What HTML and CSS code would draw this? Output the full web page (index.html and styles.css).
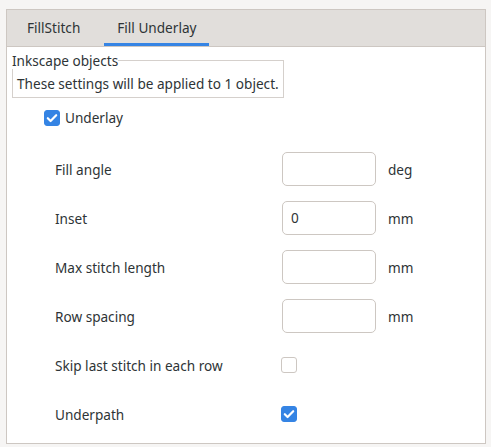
FILE: index.html
```html
<!DOCTYPE html>
<html>
<head>
<meta charset="utf-8">
<link rel="stylesheet" href="styles.css">
</head>
<body>
<div class="notebook">
  <div class="tabs">
    <div class="tab">FillStitch</div>
    <div class="tab active">Fill Underlay</div>
  </div>
  <div class="page">
    <fieldset class="frame">
      <legend class="frame-label">Inkscape objects</legend>
      <div class="frame-text">These settings will be applied to 1 object.</div>
    </fieldset>
    <label class="underlay">
      <span class="check on"><svg viewBox="0 0 16 16" width="16" height="16"><path d="M3.8 8.2 L6.6 11 L12.2 5.2" fill="none" stroke="#fff" stroke-width="2.2" stroke-linecap="round" stroke-linejoin="round"/></svg></span>
      <span>Underlay</span>
    </label>
    <div class="grid">
      <div class="lbl">Fill angle</div>
      <div class="entry"></div>
      <div class="unit">deg</div>

      <div class="lbl">Inset</div>
      <div class="entry">0</div>
      <div class="unit">mm</div>

      <div class="lbl">Max stitch length</div>
      <div class="entry"></div>
      <div class="unit">mm</div>

      <div class="lbl">Row spacing</div>
      <div class="entry"></div>
      <div class="unit">mm</div>

      <div class="lbl">Skip last stitch in each row</div>
      <div class="cbcell"><span class="check"></span></div>
      <div class="unit"></div>

      <div class="lbl">Underpath</div>
      <div class="cbcell"><span class="check on"><svg viewBox="0 0 16 16" width="16" height="16"><path d="M3.8 8.2 L6.6 11 L12.2 5.2" fill="none" stroke="#fff" stroke-width="2.2" stroke-linecap="round" stroke-linejoin="round"/></svg></span></div>
      <div class="unit"></div>
    </div>
  </div>
</div>
</body>
</html>
```

FILE: styles.css
```css
html, body {
  margin: 0;
  padding: 0;
  background: #f6f5f4;
}
body {
  font-family: "Noto Sans", "Open Sans", sans-serif;
  font-size: 13.6px;
  color: #2e3436;
  padding: 9px 0 0 6px;
}
.notebook {
  width: 478px;
  height: 433px;
  border: 1px solid #cdc7c2;
  background: #ffffff;
  display: flex;
  flex-direction: column;
}
.tabs {
  background: #e1dedb;
  border-bottom: 1px solid #cdc7c2;
  display: flex;
  padding-left: 8px;
  gap: 12px;
  box-sizing: border-box;
  flex: 0 0 auto;
  height: 37px;
}
.tab {
  padding: 0 12px;
  line-height: 36px;
  color: #2e3436;
  box-sizing: border-box;
  height: 36px;
}
.tab.active {
  padding: 0 13px;
  box-shadow: inset 0 -3px 0 #3584e4;
}
.page {
  flex: 1;
  padding: 5px 0 0 5px;
  display: flex;
  flex-direction: column;
  align-items: flex-start;
}
.frame {
  margin: 0;
  padding: 6px 4px 5px 4px;
  border: 1px solid #d5d0cc;
  border-radius: 0;
  min-width: 0;
}
.frame-label {
  padding: 0;
  margin-left: -5px;
  line-height: 17px;
}
.frame-text {
  line-height: 17px;
  white-space: nowrap;
}
.underlay {
  display: flex;
  align-items: center;
  gap: 5px;
  margin: 12px 0 0 32px;
  line-height: 16px;
}
.check {
  display: inline-block;
  width: 14px;
  height: 14px;
  border: 1px solid #cdc7c2;
  border-radius: 3px;
  background: #fff;
  position: relative;
}
.check.on {
  background: #3584e4;
  border-color: #3584e4;
}
.check svg {
  position: absolute;
  left: -1px;
  top: -1px;
}
.grid {
  display: grid;
  grid-template-columns: 215px 94px auto;
  grid-auto-rows: 34px;
  row-gap: 15px;
  column-gap: 12px;
  margin: 26px 0 0 43px;
  align-items: center;
}
.lbl {
  white-space: nowrap;
}
.entry {
  height: 34px;
  box-sizing: border-box;
  border: 1px solid #cdc7c2;
  border-radius: 5px;
  background: #fff;
  padding: 0 8px;
  line-height: 32px;
}
.cbcell {
  display: flex;
  align-items: center;
  margin-left: -1px;
}
.unit {
  white-space: nowrap;
}
```
